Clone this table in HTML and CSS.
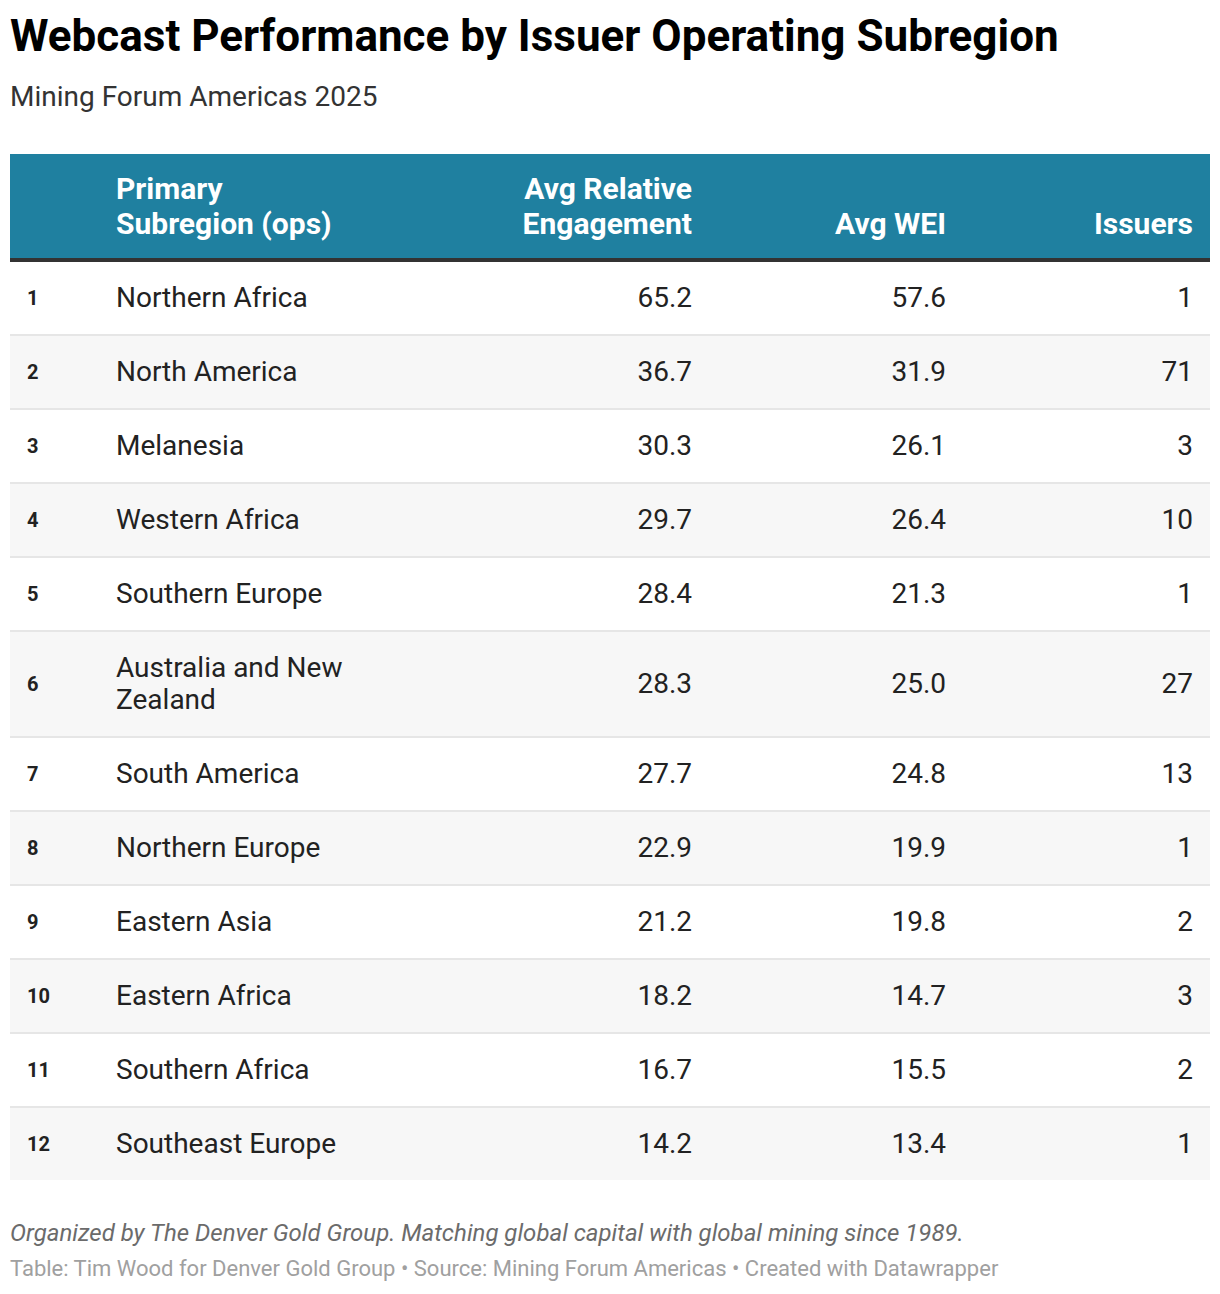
FILE: index.html
```html
<!DOCTYPE html>
<html>
<head>
<meta charset="utf-8">
<link rel="stylesheet" href="styles.css">
</head>
<body>
<div class="chart">
  <h1 class="title">Webcast Performance by Issuer Operating Subregion</h1>
  <p class="subtitle">Mining Forum Americas 2025</p>
  <table class="tbl">
    <colgroup>
      <col class="c-rank"><col class="c-name"><col class="c-rel"><col class="c-wei"><col class="c-iss">
    </colgroup>
    <thead>
      <tr>
        <th class="rank"></th>
        <th class="name">Primary<br>Subregion (ops)</th>
        <th class="num">Avg Relative<br>Engagement</th>
        <th class="num">Avg WEI</th>
        <th class="num last">Issuers</th>
      </tr>
    </thead>
    <tbody>
      <tr><td class="rank">1</td><td class="name">Northern Africa</td><td class="num">65.2</td><td class="num">57.6</td><td class="num last">1</td></tr>
      <tr><td class="rank">2</td><td class="name">North America</td><td class="num">36.7</td><td class="num">31.9</td><td class="num last">71</td></tr>
      <tr><td class="rank">3</td><td class="name">Melanesia</td><td class="num">30.3</td><td class="num">26.1</td><td class="num last">3</td></tr>
      <tr><td class="rank">4</td><td class="name">Western Africa</td><td class="num">29.7</td><td class="num">26.4</td><td class="num last">10</td></tr>
      <tr><td class="rank">5</td><td class="name">Southern Europe</td><td class="num">28.4</td><td class="num">21.3</td><td class="num last">1</td></tr>
      <tr><td class="rank">6</td><td class="name">Australia and New Zealand</td><td class="num">28.3</td><td class="num">25.0</td><td class="num last">27</td></tr>
      <tr><td class="rank">7</td><td class="name">South America</td><td class="num">27.7</td><td class="num">24.8</td><td class="num last">13</td></tr>
      <tr><td class="rank">8</td><td class="name">Northern Europe</td><td class="num">22.9</td><td class="num">19.9</td><td class="num last">1</td></tr>
      <tr><td class="rank">9</td><td class="name">Eastern Asia</td><td class="num">21.2</td><td class="num">19.8</td><td class="num last">2</td></tr>
      <tr><td class="rank">10</td><td class="name">Eastern Africa</td><td class="num">18.2</td><td class="num">14.7</td><td class="num last">3</td></tr>
      <tr><td class="rank">11</td><td class="name">Southern Africa</td><td class="num">16.7</td><td class="num">15.5</td><td class="num last">2</td></tr>
      <tr><td class="rank">12</td><td class="name">Southeast Europe</td><td class="num">14.2</td><td class="num">13.4</td><td class="num last">1</td></tr>
    </tbody>
  </table>
  <p class="notes">Organized by The Denver Gold Group. Matching global capital with global mining since 1989.</p>
  <p class="byline">Table: Tim Wood for Denver Gold Group • Source: Mining Forum Americas • Created with Datawrapper</p>
</div>
</body>
</html>
```

FILE: styles.css
```css
html, body {
  margin: 0;
  padding: 0;
  background: #ffffff;
}
body {
  font-family: Roboto, "Liberation Sans", sans-serif;
  color: #222222;
}
.chart {
  padding: 10px 10px 0 10px;
  width: 1200px;
}
.title {
  margin: 0;
  font-size: 44px;
  line-height: 52px;
  font-weight: 700;
  color: #000000;
}
.subtitle {
  margin: 20px 0 0 0;
  font-size: 28px;
  line-height: 30px;
  color: #333333;
}
.tbl {
  margin-top: 42px;
  width: 1200px;
  border-collapse: collapse;
  table-layout: fixed;
}
.c-rank { width: 90px; }
.c-name { width: 300px; }
.c-rel { width: 308px; }
.c-wei { width: 254px; }
.c-iss { width: 248px; }
.tbl thead th {
  background: #1f80a0;
  color: #ffffff;
  font-size: 30px;
  line-height: 35px;
  font-weight: 700;
  vertical-align: bottom;
  padding: 17px 16px 17px 16px;
  border-bottom: 4px solid #333333;
}
.tbl th.name, .tbl td.name { text-align: left; padding-left: 16px; padding-right: 20px; }
.tbl th.rank, .tbl td.rank { text-align: left; padding-left: 17px; padding-right: 0; }
.tbl .num { text-align: right; padding-right: 16px; }
.tbl .last { padding-right: 17px; }
.tbl tbody td {
  font-size: 28px;
  line-height: 32px;
  padding-top: 20px;
  padding-bottom: 20px;
  border-bottom: 2px solid #e6e6e6;
  color: #222222;
}
.tbl tbody tr:nth-child(even) td { background: #f7f7f7; }
.tbl tbody tr:last-child td { border-bottom: none; }
.tbl tbody td.rank {
  font-size: 20px;
  font-weight: 700;
}
.notes {
  margin: 38px 0 0 0;
  font-size: 24px;
  line-height: 30px;
  font-style: italic;
  color: #6b6b6b;
}
.byline {
  margin: 7px 0 0 0;
  font-size: 22px;
  line-height: 28px;
  color: #a0a0a0;
}
```
